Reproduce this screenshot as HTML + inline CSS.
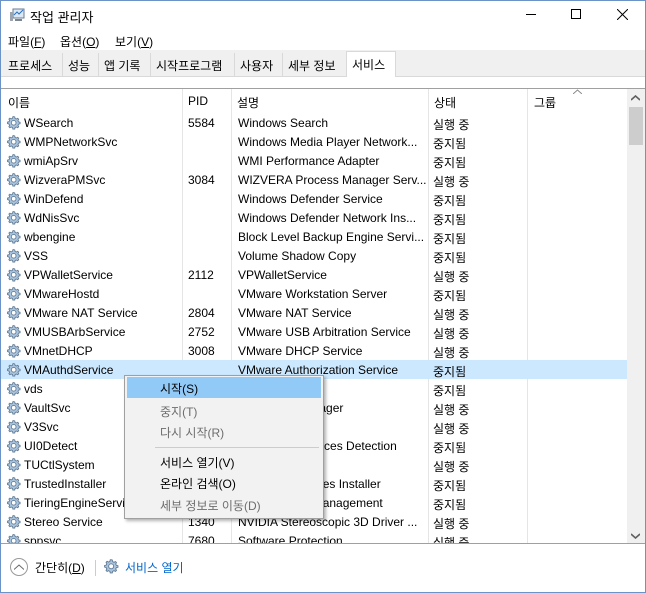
<!DOCTYPE html><html><head><meta charset="utf-8"><style>
*{margin:0;padding:0;box-sizing:border-box}
body{width:646px;height:593px;background:#fff;font-family:"Liberation Sans","Noto Sans CJK KR",sans-serif;font-size:12px;color:#000;position:relative;overflow:hidden}
.a{position:absolute;white-space:nowrap}
.win{position:absolute;left:0;top:0;width:646px;height:593px;border:1px solid #6b93c7}
.row{position:absolute;left:1px;width:626px;height:19px}
.row span{position:absolute;top:3px;white-space:nowrap;overflow:hidden}
.g{position:absolute;left:5px;top:2px;width:16px;height:16px}
.tab{position:absolute;top:53px;height:23px;border-right:1px solid #d9d9d9;padding:4px 5px 0;font-size:12px}
.mi{position:absolute;left:35px;font-size:12px}
.dis{color:#6d6d6d}
</style></head><body>
<div class="win"></div>
<svg class="a" style="left:9px;top:8px" width="16" height="14"><rect x="4" y="1" width="11" height="9" fill="#dce9f5" stroke="#6a7d92"/><polyline points="5,7 8,4 10,6 14,2" fill="none" stroke="#2a6fc0"/><rect x="1" y="4" width="3" height="9" fill="#9aa5b0"/><rect x="6" y="11" width="7" height="2" fill="#7a8590"/></svg>
<div class="a" style="left:30px;top:7px;font-size:13px">작업 관리자</div>
<div class="a" style="left:526px;top:14px;width:10px;border-top:1px solid #000"></div>
<div class="a" style="left:571px;top:9px;width:10px;height:10px;border:1px solid #000"></div>
<svg class="a" style="left:617px;top:9px" width="11" height="11"><path d="M0 0L11 11M11 0L0 11" stroke="#000"/></svg>
<div class="a" style="left:8px;top:33px">파일(<u>F</u>)</div>
<div class="a" style="left:60px;top:33px">옵션(<u>O</u>)</div>
<div class="a" style="left:115px;top:33px">보기(<u>V</u>)</div>
<div class="a" style="left:1px;top:50px;width:644px;height:26px;background:#f0f0f0"></div>
<div class="a" style="left:1px;top:76px;width:644px;border-top:1px solid #d9d9d9"></div>
<div class="tab" style="left:3px;width:60px">프로세스</div>
<div class="tab" style="left:63px;width:36px">성능</div>
<div class="tab" style="left:99px;width:52px">앱 기록</div>
<div class="tab" style="left:151px;width:84px">시작프로그램</div>
<div class="tab" style="left:235px;width:48px">사용자</div>
<div class="tab" style="left:283px;width:64px">세부 정보</div>
<div class="tab" style="left:346px;top:51px;height:26px;width:50px;background:#fff;border:1px solid #d9d9d9;border-bottom:none">서비스</div>
<div class="a" style="left:1px;top:88px;width:644px;border-top:1px solid #a0a0a0"></div>
<div class="a" style="left:182px;top:89px;height:454px;border-left:1px solid #e5e5e5"></div>
<div class="a" style="left:231px;top:89px;height:454px;border-left:1px solid #e5e5e5"></div>
<div class="a" style="left:428px;top:89px;height:454px;border-left:1px solid #e5e5e5"></div>
<div class="a" style="left:527px;top:89px;height:454px;border-left:1px solid #e5e5e5"></div>
<div class="a" style="left:8px;top:94px">이름</div>
<div class="a" style="left:188px;top:94px">PID</div>
<div class="a" style="left:237px;top:94px">설명</div>
<div class="a" style="left:434px;top:94px">상태</div>
<div class="a" style="left:534px;top:94px">그룹</div>
<svg class="a" style="left:573px;top:89px" width="9" height="5"><path d="M0 5L4.5 1L9 5" fill="none" stroke="#888"/></svg>
<div class="a" style="left:627px;top:89px;width:18px;height:454px;background:#f0f0f0"></div>
<div class="a" style="left:629px;top:107px;width:14px;height:38px;background:#cdcdcd"></div>
<svg class="a" style="left:631px;top:95px" width="9" height="6"><path d="M0 5L4.5 1L9 5" fill="none" stroke="#606060" stroke-width="1.6"/></svg>
<svg class="a" style="left:631px;top:533px" width="9" height="6"><path d="M0 1L4.5 5L9 1" fill="none" stroke="#606060" stroke-width="1.6"/></svg>
<div id="rows" class="a" style="left:0;top:113px;width:627px;height:430px;overflow:hidden"></div>
<div class="a" style="left:1px;top:543px;width:644px;border-top:1px solid #a0a0a0"></div>
<div class="a" style="left:10px;top:558px;width:18px;height:18px;border:1px solid #999;border-radius:50%"></div>
<svg class="a" style="left:14px;top:564px" width="10" height="6"><path d="M0 5.5L5 1L10 5.5" fill="none" stroke="#666"/></svg>
<div class="a" style="left:35px;top:559px;font-size:12px">간단히(<u>D</u>)</div>
<div class="a" style="left:95px;top:560px;height:16px;border-left:1px solid #ccc"></div>
<svg class="a gear" style="left:103px;top:558px" width="17" height="17"></svg>
<div class="a" style="left:125px;top:559px;color:#0066cc">서비스 열기</div>
<div class="a" style="left:124px;top:375px;width:200px;height:144px;background:#f2f2f2;border:1px solid #a0a0a0;box-shadow:2px 2px 3px rgba(0,0,0,.3)">
<div class="a" style="left:2px;top:1px;width:194px;height:21px;background:#91c9f7"></div>
<div class="mi" style="top:4px">시작(S)</div>
<div class="mi dis" style="top:27px">중지(T)</div>
<div class="mi dis" style="top:48px">다시 시작(R)</div>
<div class="a" style="left:30px;top:71px;width:164px;border-top:1px solid #ccc"></div>
<div class="mi" style="top:78px">서비스 열기(V)</div>
<div class="mi" style="top:99px">온라인 검색(O)</div>
<div class="mi dis" style="top:121px">세부 정보로 이동(D)</div>
</div>
<script>
var d=[["WSearch","5584","Windows Search","실행 중"],["WMPNetworkSvc","","Windows Media Player Network...","중지됨"],["wmiApSrv","","WMI Performance Adapter","중지됨"],["WizveraPMSvc","3084","WIZVERA Process Manager Serv...","실행 중"],["WinDefend","","Windows Defender Service","중지됨"],["WdNisSvc","","Windows Defender Network Ins...","중지됨"],["wbengine","","Block Level Backup Engine Servi...","중지됨"],["VSS","","Volume Shadow Copy","중지됨"],["VPWalletService","2112","VPWalletService","실행 중"],["VMwareHostd","","VMware Workstation Server","중지됨"],["VMware NAT Service","2804","VMware NAT Service","실행 중"],["VMUSBArbService","2752","VMware USB Arbitration Service","실행 중"],["VMnetDHCP","3008","VMware DHCP Service","실행 중"],["VMAuthdService","","VMware Authorization Service","중지됨"],["vds","","","중지됨"],["VaultSvc","","Credential Manager","실행 중"],["V3Svc","","V3 Service","실행 중"],["UI0Detect","","Interactive Services Detection","중지됨"],["TUCtlSystem","","","실행 중"],["TrustedInstaller","","Windows Modules Installer","중지됨"],["TieringEngineService","","Storage Tiers Management","중지됨"],["Stereo Service","1340","NVIDIA Stereoscopic 3D Driver ...","실행 중"],["sppsvc","7680","Software Protection","실행 중"]];
var gear='<path d="M7 1.5l1.2.3.3 1.4 1.2.6 1.3-.7.9.9-.7 1.3.6 1.2 1.4.3v1.4l-1.4.3-.6 1.2.7 1.3-.9.9-1.3-.7-1.2.6-.3 1.4H6.4l-.3-1.4-1.2-.6-1.3.7-.9-.9.7-1.3-.6-1.2L1.4 8V6.6l1.4-.3.6-1.2-.7-1.3.9-.9 1.3.7 1.2-.6.3-1.4z" fill="#aac4de" stroke="#5f7a94" stroke-width=".8"/><circle cx="7.2" cy="7.3" r="2.2" fill="#fff" stroke="#5f7a94" stroke-width=".8"/>';
var h='';d.forEach(function(r,i){h+='<div class="row" style="top:'+(i*19)+'px;'+(i==13?'background:#cce8ff':'')+'"><svg class="g" viewBox="0 0 15 15">'+gear+'</svg><span style="left:23px;width:158px">'+r[0]+'</span><span style="left:187px">'+r[1]+'</span><span style="left:237px;width:188px">'+r[2]+'</span><span style="left:432px">'+r[3]+'</span></div>'});
document.getElementById('rows').innerHTML=h;
document.querySelector('.gear').innerHTML=gear;document.querySelector('.gear').setAttribute('viewBox','0 0 15 15');
</script>
</body></html>
